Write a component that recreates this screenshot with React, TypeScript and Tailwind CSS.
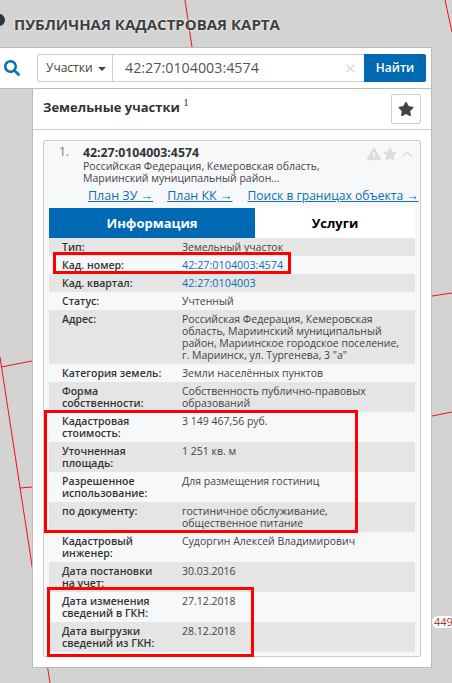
import { ChevronUp, X } from "lucide-react";
import { FaExclamationTriangle, FaSearch, FaStar } from "react-icons/fa";

const rows: { label: string; value: string; link?: boolean; h: string }[] = [
  { label: "Тип:", value: "Земельный участок", h: "h-[18px]" },
  { label: "Кад. номер:", value: "42:27:0104003:4574", link: true, h: "h-[18px]" },
  { label: "Кад. квартал:", value: "42:27:0104003", link: true, h: "h-[18px]" },
  { label: "Статус:", value: "Учтенный", h: "h-[18px]" },
  {
    label: "Адрес:",
    value: 'Российская Федерация, Кемеровская область, Мариинский муниципальный район, Мариинское городское поселение, г. Мариинск, ул. Тургенева, 3 "а"',
    h: "h-[54px]",
  },
  { label: "Категория земель:", value: "Земли населённых пунктов", h: "h-[18px]" },
  { label: "Форма собственности:", value: "Собственность публично-правовых образований", h: "h-[30px]" },
  { label: "Кадастровая стоимость:", value: "3 149 467,56 руб.", h: "h-[30px]" },
  { label: "Уточненная площадь:", value: "1 251 кв. м", h: "h-[30px]" },
  { label: "Разрешенное использование:", value: "Для размещения гостиниц", h: "h-[30px]" },
  { label: "по документу:", value: "гостиничное обслуживание, общественное питание", h: "h-[30px]" },
  { label: "Кадастровый инженер:", value: "Судоргин Алексей Владимирович", h: "h-[30px]" },
  { label: "Дата постановки на учет:", value: "30.03.2016", h: "h-[30px]" },
  { label: "Дата изменения сведений в ГКН:", value: "27.12.2018", h: "h-[30px]" },
  { label: "Дата выгрузки сведений из ГКН:", value: "28.12.2018", h: "h-[30px]" },
];

export default function App() {
  return (
    <div className="relative h-[683px] w-[452px] overflow-hidden bg-[#d3d3d3] font-['Open_Sans',sans-serif] text-[10.5px] leading-[12px] text-[#333]">
      {/* map parcels */}
      <svg className="absolute inset-0" width="452" height="683" fill="none" stroke="#f01020" strokeWidth="1">
        <path d="M185 0 L192 47" />
        <path d="M445 0 L452 32" />
        <path d="M0 357 L50 683" />
        <path d="M1 367 L32 361" />
        <path d="M20 488 L32 487" />
        <path d="M432 296 L452 293" />
        <path d="M432 416 L452 412" />
      </svg>
      <div className="absolute left-[432px] top-[616px] rounded-l-full bg-white pl-[2px] pr-[2px] text-[11px] text-[#a33]">449</div>

      <div className="relative flex h-[47px] items-center pl-[14px] text-[15px] font-bold text-[#404040] [text-shadow:0_0_3px_#fff]">
        <span className="absolute left-[-7px] top-[14px] h-[12px] w-[12px] rounded-full bg-[#333]" />
        ПУБЛИЧНАЯ КАДАСТРОВАЯ КАРТА
      </div>

      <div className="relative flex h-[42px] w-[432px] items-center border border-[#bbb] border-l-0 bg-white">
        <FaSearch className="ml-[4px] text-[#0b6fb8]" size={16} />
        <div className="ml-[17px] flex h-[28px] w-[389px] rounded-[2px] border border-[#ccc]">
          <div className="flex w-[75px] items-center gap-[5px] border-r border-[#ccc] pl-[8px] text-[12px] text-[#444]">
            Участки
            <span className="mt-[2px] border-x-[4px] border-t-[4px] border-x-transparent border-t-[#444]" />
          </div>
          <div className="flex flex-1 items-center pl-[12px] text-[14.3px] text-[#555]">
            42:27:0104003:4574
            <X className="ml-auto mr-[7px] text-[#d5d5d5]" size={13} />
          </div>
          <div className="-my-px -mr-px flex w-[62px] items-center justify-center rounded-r-[2px] bg-[#0069b4] text-[12px] font-semibold text-white">
            Найти
          </div>
        </div>
      </div>

      <div className="relative ml-[32px] w-[400px] border border-t-0 border-[#bbb] bg-white pb-[10px]">
        <div className="flex h-[41px] items-start justify-between border-b border-[#ccc] px-[10px] pt-[5px]">
          <div className="mt-[5px] text-[13px] font-bold leading-[16px]">
            Земельные участки <sup className="-top-[6px] font-['Liberation_Serif',serif] text-[11px] font-normal">1</sup>
          </div>
          <div className="flex h-[30px] w-[30px] items-center justify-center rounded-[2px] border border-[#ccc]">
            <FaStar size={16} color="#444" />
          </div>
        </div>

        <div className="ml-[10px] mt-[10px] w-[378px] rounded-[2px] border border-[#ccc] bg-[#f7f8fa] px-[5px] pb-[4px]">
          <div className="relative flex h-[67px] pt-[5px]">
            <span className="ml-[10px] w-[24px] text-[12px] text-[#777]">1.</span>
            <div>
              <div className="text-[12.3px] font-bold leading-[14px]">42:27:0104003:4574</div>
              <div className="w-[260px] text-[#444]">Российская Федерация, Кемеровская область, Мариинский муниципальный район...</div>
            </div>
            <div className="absolute right-0 top-[5px] flex items-center gap-[2px] text-[#ddd]">
              <FaExclamationTriangle size={14} />
              <FaStar size={14} />
              <ChevronUp size={16} />
            </div>
            <div className="absolute bottom-[6px] left-[39px] flex items-baseline whitespace-nowrap text-[12.5px] text-[#0b6fb8] underline">
              <span>План ЗУ →</span>
              <span className="ml-[14px]">План КК →</span>
              <span className="ml-[15px] text-[12.1px]">Поиск в границах объекта →</span>
            </div>
          </div>

          <div className="flex h-[30px] rounded-t-[2px] text-[13px] font-bold">
            <div className="flex w-[206px] items-center justify-center bg-[#0069b4] text-white">Информация</div>
            <div className="flex flex-1 items-center justify-center bg-white text-black">Услуги</div>
          </div>

          {rows.map((r) => (
            <div key={r.label} className={`flex pt-[3px] odd:bg-[#e5e5e5] ${r.h}`}>
              <div className="ml-[13px] mr-[15px] w-[105px] font-semibold">{r.label}</div>
              <div className={`w-[218px] ${r.link ? "text-[10.8px] text-[#0b6fb8]" : "text-[#444]"}`}>{r.value}</div>
            </div>
          ))}
        </div>
      </div>

      {/* red annotation frames */}
      <div className="absolute left-[53px] top-[252px] h-[22px] w-[238px] border-[3px] border-[#f00]" />
      <div className="absolute left-[44px] top-[410px] h-[123px] w-[314px] border-[3px] border-[#f00]" />
      <div className="absolute left-[47px] top-[587px] h-[70px] w-[207px] border-[3px] border-[#f00]" />
    </div>
  );
}
